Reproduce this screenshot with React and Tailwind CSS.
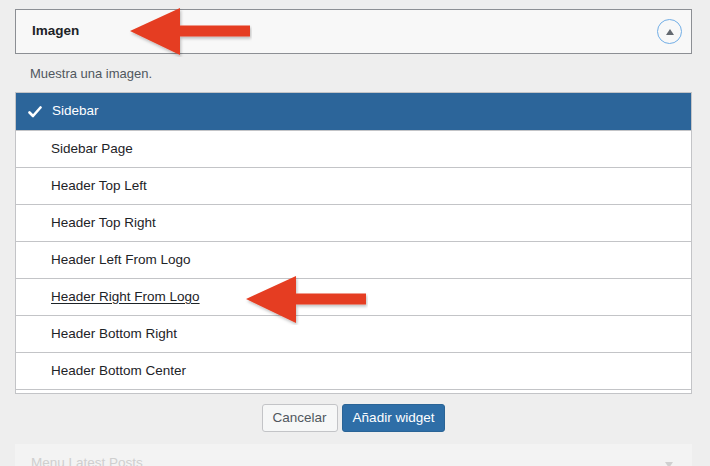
import React from 'react';

const rows = [
  'Sidebar Page',
  'Header Top Left',
  'Header Top Right',
  'Header Left From Logo',
  'Header Right From Logo',
  'Header Bottom Right',
  'Header Bottom Center',
  'Header Bottom Left',
];

const Arrow = ({ className }) => (
  <svg className={className} width="124" height="50" viewBox="0 0 124 50">
    <defs>
      <filter id="sh" x="-10%" y="-20%" width="130%" height="150%">
        <feDropShadow dx="1" dy="2" stdDeviation="1.5" floodColor="#000" floodOpacity="0.25" />
      </filter>
    </defs>
    <polygon
      points="2,24 52,1 52,18.5 122,18.5 122,29.5 52,29.5 52,48"
      fill="#e53e22"
      filter="url(#sh)"
    />
  </svg>
);

const App = () => {
  return (
    <div className="relative w-[710px] h-[466px] overflow-hidden bg-[#eeeeee] font-['Liberation_Sans',Arial,sans-serif] text-[13.5px] text-[#1d2327]">
      <div className="pl-[15px] pt-[9px] w-[692px]">
        {/* Widget header */}
        <div className="h-[45px] flex items-center justify-between border border-[#8c8f94] bg-[#f8f8f8] pl-[16px] pr-[9px]">
          <span className="font-bold text-[#1d2327]">Imagen</span>
          <span className="w-[25px] h-[25px] rounded-full border border-[#72aee6] flex items-center justify-center">
            <svg width="10" height="8" viewBox="0 0 10 8">
              <polygon points="5,1 9,7 1,7" fill="#646970" />
            </svg>
          </span>
        </div>

        <p className="pl-[15px] pt-[12px] pb-[10px] text-[#50575e] text-[13px] leading-[16px]">Muestra una imagen.</p>

        {/* Sidebar list */}
        <div className="h-[302px] overflow-hidden border border-[#c3c4c7] bg-white">
          <div className="h-[38px] flex items-center bg-[#2c659a] text-white border-b border-[#c3c4c7]">
            <svg className="ml-[12px] mr-[10px]" width="14" height="12" viewBox="0 0 14 12">
              <path d="M1.5 6.5 L5 10 L12.5 1.5" stroke="#fff" strokeWidth="2.6" fill="none" strokeLinecap="round" strokeLinejoin="round" />
            </svg>
            <span>Sidebar</span>
          </div>
          {rows.map((r) => (
            <div key={r} className="h-[37px] flex items-center border-b border-[#c3c4c7] pl-[35px]">
              <span className={r === 'Header Right From Logo' ? 'underline underline-offset-2' : ''}>{r}</span>
            </div>
          ))}
        </div>

        {/* Buttons */}
        <div className="flex justify-center gap-[4px] pt-[10px]">
          <button className="h-[28px] px-[10px] rounded-[3px] border border-[#c3c4c7] bg-[#f6f7f7] text-[#50575e] leading-[26px]">
            Cancelar
          </button>
          <button className="h-[28px] px-[10px] rounded-[3px] border border-[#2a6496] bg-[#2e6ea7] text-white leading-[26px]">
            Añadir widget
          </button>
        </div>

        {/* Next widget (faded) */}
        <div className="mt-[12px] h-[40px] bg-[#f3f3f3] flex items-start justify-between pl-[16px] pr-[18px] pt-[11px]">
          <span className="text-[#cfcfcf] leading-[16px]">Menu Latest Posts</span>
          <svg width="10" height="8" viewBox="0 0 10 8" className="mt-[6px]">
            <polygon points="1,1 9,1 5,7" fill="#d0d0d0" />
          </svg>
        </div>
      </div>

      {/* Annotation arrows */}
      <Arrow className="absolute left-[128px] top-[7px]" />
      <Arrow className="absolute left-[244px] top-[275px]" />
    </div>
  );
};

export default App;
